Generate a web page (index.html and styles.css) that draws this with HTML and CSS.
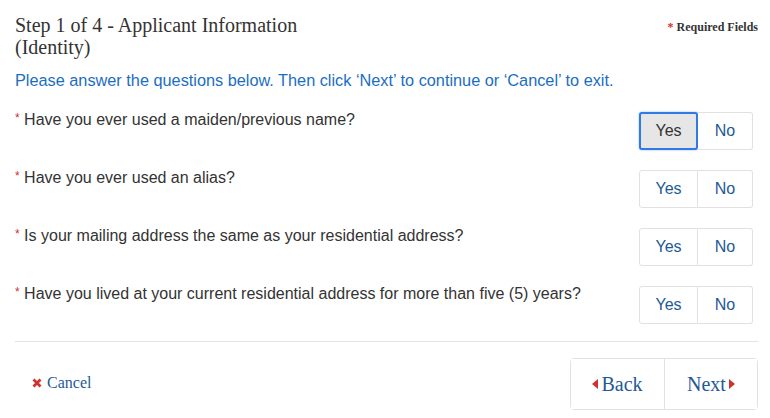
FILE: index.html
```html
<!DOCTYPE html>
<html>
<head>
<meta charset="utf-8">
<link rel="stylesheet" href="styles.css">
</head>
<body>
<div class="page">
  <div class="header">
    <h1 class="title">Step 1 of 4 - Applicant Information (Identity)</h1>
    <div class="required"><span class="star">*</span> Required Fields</div>
  </div>
  <p class="intro">Please answer the questions below. Then click ‘Next’ to continue or ‘Cancel’ to exit.</p>
  <div class="questions">
    <div class="q-row">
      <div class="q-text"><span class="q-star">*</span> Have you ever used a maiden/previous name?</div>
      <div class="yn"><button class="yn-btn yes active">Yes</button><button class="yn-btn no">No</button></div>
    </div>
    <div class="q-row">
      <div class="q-text"><span class="q-star">*</span> Have you ever used an alias?</div>
      <div class="yn"><button class="yn-btn yes">Yes</button><button class="yn-btn no">No</button></div>
    </div>
    <div class="q-row">
      <div class="q-text"><span class="q-star">*</span> Is your mailing address the same as your residential address?</div>
      <div class="yn"><button class="yn-btn yes">Yes</button><button class="yn-btn no">No</button></div>
    </div>
    <div class="q-row">
      <div class="q-text"><span class="q-star">*</span> Have you lived at your current residential address for more than five (5) years?</div>
      <div class="yn"><button class="yn-btn yes">Yes</button><button class="yn-btn no">No</button></div>
    </div>
  </div>
  <div class="footer">
    <a class="cancel" href="#"><svg class="x-icon" width="10" height="10" viewBox="0 0 10 10"><path d="M1.5 1.5 L8.5 8.5 M8.5 1.5 L1.5 8.5" stroke="#d0312d" stroke-width="2.8" stroke-linecap="butt"/></svg>Cancel</a>
    <div class="nav">
      <button class="nav-btn"><span class="tri tri-left"></span>Back</button>
      <button class="nav-btn">Next<span class="tri tri-right"></span></button>
    </div>
  </div>
</div>
</body>
</html>
```

FILE: styles.css
```css
* { box-sizing: border-box; }
html, body { margin: 0; padding: 0; background: #fff; }
body { font-family: "Liberation Sans", Arial, sans-serif; color: #333; }
.page { padding: 0 12px 0 15px; }
.header { display: flex; justify-content: space-between; align-items: flex-start; padding-top: 14px; }
.title { margin: 0; width: 310px; font-family: "Liberation Serif", "Times New Roman", serif; font-weight: normal; font-size: 20px; line-height: 22px; color: #333; }
.required { font-family: "Liberation Serif", "Times New Roman", serif; font-weight: bold; font-size: 12px; line-height: 14px; margin-top: 6px; color: #333; }
.required .star { color: #d0312d; }
.intro { margin: 12px 0 0; font-size: 16.3px; line-height: 20px; color: #1a6ec2; }
.questions { display: flex; flex-direction: column; gap: 16px; margin-top: 18px; padding-bottom: 17px; border-bottom: 1px solid #e3e3e3; }
.q-row { display: flex; justify-content: space-between; align-items: flex-start; }
.q-text { font-size: 16px; line-height: 20px; color: #333; }
.q-star { color: #d0312d; font-size: 12px; vertical-align: 3px; }
.yn { display: flex; margin-top: 4px; margin-right: 5px; }
.yn-btn { font-family: "Liberation Sans", Arial, sans-serif; font-size: 16px; color: #1c5a94; background: #fff; border: 1px solid #e1e1e1; height: 38px; padding: 0; cursor: pointer; }
.yn-btn.yes { width: 59px; border-radius: 3px 0 0 3px; }
.yn-btn.no { width: 55px; border-left: none; border-radius: 0 3px 3px 0; }
.yn-btn.active { background: #e6e6e6; color: #333; border: 2px solid #2f7ae5; border-radius: 3px; box-shadow: 0 0 2px rgba(47,122,229,0.6); }
.footer { display: flex; justify-content: space-between; align-items: center; padding-top: 16px; }
.cancel { display: flex; align-items: center; gap: 5px; padding-left: 17px; font-family: "Liberation Serif", "Times New Roman", serif; font-size: 16px; color: #1f5a94; text-decoration: none; margin-top: -2px; }
.nav { display: flex; border: 1px solid #e1e1e1; border-radius: 4px; height: 52px; }
.nav-btn { width: 93px; background: #fff; border: none; font-family: "Liberation Serif", "Times New Roman", serif; font-size: 20px; color: #1f5a94; display: flex; align-items: center; justify-content: center; gap: 3px; padding: 0; cursor: pointer; }
.nav-btn + .nav-btn { border-left: 1px solid #e1e1e1; }
.tri { display: inline-block; width: 0; height: 0; border-top: 5px solid transparent; border-bottom: 5px solid transparent; }
.tri-left { border-right: 6px solid #d0312d; }
.tri-right { border-left: 6px solid #d0312d; }
```
